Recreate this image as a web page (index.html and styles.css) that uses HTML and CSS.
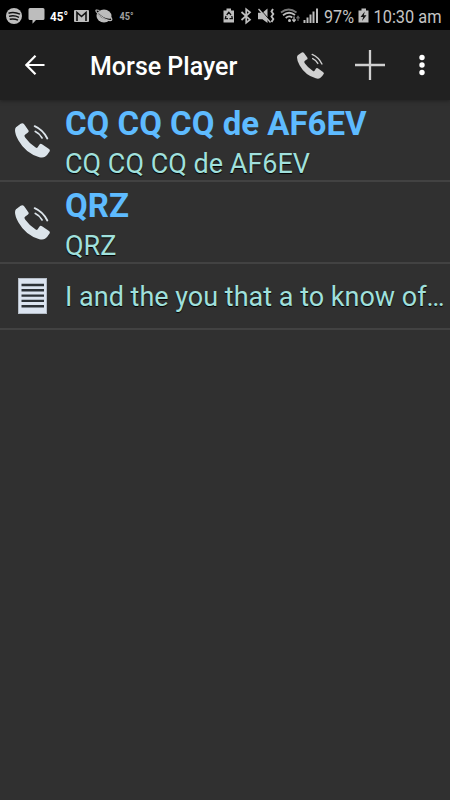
FILE: index.html
```html
<!DOCTYPE html>
<html lang="en">
<head>
    <meta charset="UTF-8">
    <meta name="viewport" content="width=device-width, initial-scale=1.0">
    <title>Morse Player</title>
    <link rel="stylesheet" href="styles.css">
</head>
<body>
    <svg width="0" height="0" class="defs">
        <symbol id="phone" viewBox="0 0 105 104">
            <path fill="currentColor" d="M3 12L17 2Q23-2 28 4L40 21Q43 26 38 29L31 34Q26 37 31 44Q42 60 62 73Q67 76 69 71L73 65Q76 60 81 63L101 77Q107 81 103 86Q98 95 90 101Q83 105 73 102Q32 90 10 51Q0 33 0 21Q0 15 3 12Z"/>
            <path fill="none" stroke="currentColor" stroke-width="5.500" stroke-linecap="round" d="M59 9Q84 20 97 46M61 25Q74 31 81 44"/>
        </symbol>
    </svg>

    <div class="status-bar">
        <svg class="status-icons" width="142" height="30" viewBox="0 0 142 30">
            <circle cx="14" cy="16" r="8" fill="#bdbdbd"/>
            <path d="M8.500 13.200Q14 11.200 20 14.200M9 16.400Q14 14.800 19 17.300M9.700 19.300Q14 18.200 18 20.200" fill="none" stroke="#111" stroke-width="1.500"/>
            <path d="M30 8H43Q44.500 8 44.500 9.500V18.500Q44.500 20 43 20H36L32.500 23.800V20H30Q28.500 20 28.500 18.500V9.500Q28.500 8 30 8Z" fill="#bdbdbd"/>
            <text x="50" y="20.800" class="temp" textLength="18" lengthAdjust="spacingAndGlyphs">45°</text>
            <rect x="74" y="10" width="15" height="12" rx="1" fill="#bdbdbd"/>
            <path d="M77 21V12.500L81.500 16.500L86 12.500V21" fill="none" stroke="#111" stroke-width="1.600"/>
            <ellipse cx="104" cy="16" rx="7.500" ry="6.500" fill="#bdbdbd"/>
            <path d="M98 13.500Q104 20.300 111 19.300" fill="none" stroke="#111" stroke-width="1.300"/>
            <path d="M99.500 10.500Q94.500 9 96.500 12Q99 15.500 104 18.500Q109.500 21.500 111.500 20.300Q112.500 19.300 110.500 17" fill="none" stroke="#bdbdbd" stroke-width="1.200"/>
            <text x="119.500" y="20" class="temp temp-small" textLength="14" lengthAdjust="spacingAndGlyphs">45°</text>
        </svg>

        <svg class="status-icons" width="235" height="30" viewBox="215 0 235 30">
            <path d="M226.500 8.500H231V10.500H234V22.500H223.500V10.500H226.500Z" fill="#bdbdbd"/>
            <path d="M226.700 15L228.800 12.200L231 15M231.800 16L232.300 18.700H229.500M228 18.700H225.300L226 16" fill="none" stroke="#111" stroke-width="1.300"/>
            <path d="M241.500 12L250 19.700L246.200 22.700V9.300L250 12.300L241.500 20" fill="none" stroke="#bdbdbd" stroke-width="1.700"/>
            <path d="M258 12.800H262.500L267.500 8.500V23L262.500 19.200H258Z" fill="#bdbdbd"/>
            <path d="M259.500 8.500L271.500 22" stroke="#000" stroke-width="1"/>
            <path d="M258.500 9L270.500 22.500" stroke="#bdbdbd" stroke-width="1.400"/>
            <path d="M273 9L271.500 11.500L273.300 14L271.500 16.500L273.300 19L271.500 22" fill="none" stroke="#bdbdbd" stroke-width="1.900"/>
            <path d="M281 12.500Q288.500 6.500 296.500 12.500" fill="none" stroke="#777" stroke-width="1.800"/>
            <path d="M283 15.200Q289 10.300 295 15M285.700 18Q289 15 292.300 17.500" fill="none" stroke="#bdbdbd" stroke-width="1.800"/>
            <circle cx="289.500" cy="20.500" r="1.500" fill="#bdbdbd"/>
            <path d="M294 16.500V21M292.300 19.500L294 21.500L295.700 19.500" fill="none" stroke="#bdbdbd" stroke-width="1.200"/>
            <path d="M298 21V16.500M296.500 18.300L298 16.300L299.500 18.300" fill="none" stroke="#666" stroke-width="1.200"/>
            <path d="M304.500 20V23M307.500 17.500V23M310.500 14.500V23M313.500 11.500V23M317 8.500V23" stroke="#bdbdbd" stroke-width="2"/>
            <text x="324" y="23" class="status-text" textLength="30" lengthAdjust="spacingAndGlyphs">97%</text>
            <path d="M361.500 8.500H366V10.500H368.500V22.500H358.500V10.500H361.500Z" fill="#bdbdbd"/>
            <path d="M364.800 11.500L360.500 17H363.200L362 21L366.500 15.200H363.800Z" fill="#111"/>
            <text x="373.500" y="23" class="status-text" textLength="68" lengthAdjust="spacingAndGlyphs">10:30 am</text>
        </svg>
    </div>

    <header class="toolbar">
        <svg class="back" width="20" height="20" viewBox="0 0 20 20">
            <path d="M10.500 .8L1.400 10L10.500 19.200M1.400 10H19.500" fill="none" stroke="#fff" stroke-width="2.200"/>
        </svg>
        <h1>Morse Player</h1>
        <svg class="call" width="27" height="27"><use href="#phone"/></svg>
        <svg class="add" width="30" height="30" viewBox="0 0 30 30">
            <path d="M0 15H30M15 0V30" stroke="#d0d0d0" stroke-width="2.300"/>
        </svg>
        <svg class="more" width="6" height="22" viewBox="0 0 6 22">
            <g fill="#fff">
                <circle cx="3" cy="3.500" r="2.700"/>
                <circle cx="3" cy="11" r="2.700"/>
                <circle cx="3" cy="18.500" r="2.700"/>
            </g>
        </svg>
    </header>

    <ul class="list">
        <li class="item">
            <svg class="item-icon" width="35" height="35"><use href="#phone"/></svg>
            <div class="item-text">
                <div class="item-title">CQ CQ CQ de AF6EV</div>
                <div class="item-message">CQ CQ CQ de AF6EV</div>
            </div>
        </li>
        <li class="item">
            <svg class="item-icon" width="35" height="35"><use href="#phone"/></svg>
            <div class="item-text">
                <div class="item-title">QRZ</div>
                <div class="item-message">QRZ</div>
            </div>
        </li>
        <li class="item item-single">
            <svg class="item-icon" width="35" height="36" viewBox="0 0 35 36">
                <rect x="3.500" y=".5" width="28" height="35" fill="#dbe4f0" stroke="#b4bcc6"/>
                <path d="M6.500 7H29M6.500 12.300H29M6.500 17.600H29M6.500 22.900H29M6.500 28.200H29" stroke="#2b3136" stroke-width="2.400"/>
            </svg>
            <div class="item-text">
                <div class="item-message">I and the you that a to know of…</div>
            </div>
        </li>
    </ul>
</body>
</html>
```

FILE: styles.css
```css
body {
    margin: 0;
    min-height: 100vh;
    font-family: Roboto, sans-serif;
    background-color: #303030;
}
svg {
    display: block;
    flex-shrink: 0;
}
.defs {
    position: absolute;
}
.status-bar {
    display: flex;
    justify-content: space-between;
    height: 30px;
    background-color: #000;
}
.status-text {
    fill: #c4c4c4;
    font-size: 18.500px;
}
.temp {
    fill: #fff;
    font-size: 13px;
    font-weight: bold;
}
.temp-small {
    fill: #a0a0a0;
    font-size: 10.500px;
}
.toolbar {
    display: flex;
    align-items: center;
    box-sizing: border-box;
    height: 70px;
    padding: 0 25px;
    background-color: #212121;
    box-shadow: 0 1px 4px rgba(0,0,0,0.35);
}
h1 {
    flex: 1;
    margin: 3px 0 0 45px;
    color: #fff;
    font-size: 25px;
    font-weight: 500;
    line-height: 30px;
}
.call {
    color: #d0d0d0;
    margin-right: 31px;
}
.add {
    margin-right: 34px;
}
.list {
    margin: 0;
    padding: 0;
    list-style: none;
}
.item {
    display: flex;
    align-items: center;
    box-sizing: border-box;
    height: 82px;
    border-bottom: 2px solid #424242;
}
.item-single {
    height: 66px;
}
.item-icon {
    color: #dce4ea;
    margin: 0 15px;
}
.item-text {
    flex: 1;
    min-width: 0;
    padding-top: 5px;
}
.item-single .item-text {
    padding-top: 2px;
}
.item-title {
    color: #5ebbff;
    font-size: 33px;
    font-weight: bold;
    line-height: 42px;
}
.item-message {
    color: #a0e0dc;
    font-size: 27px;
    line-height: 38px;
    overflow: hidden;
    text-overflow: ellipsis;
    white-space: nowrap;
    text-shadow: 0 1px 1px #000;
}
```
